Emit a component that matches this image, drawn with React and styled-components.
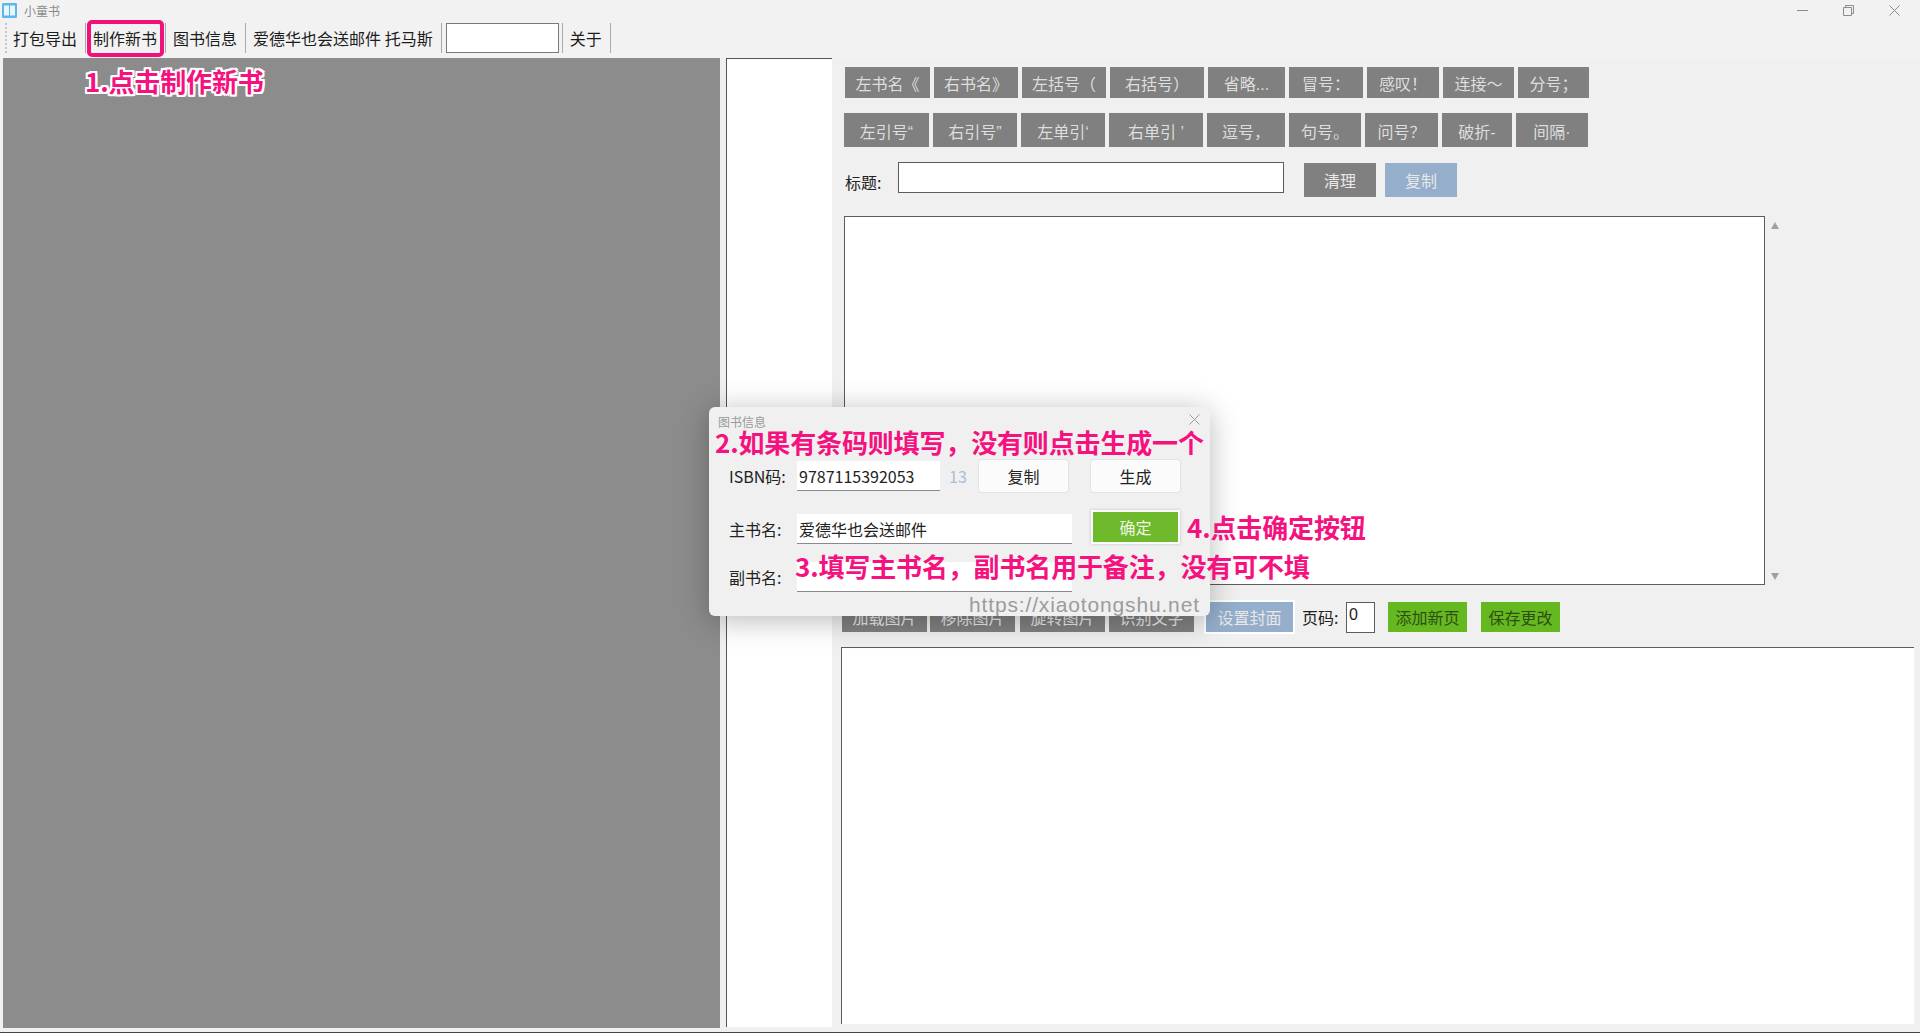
import React from "react";
import styled, { createGlobalStyle } from "styled-components";

const GlobalStyle = createGlobalStyle`
    html, body {
        margin: 0;
        padding: 0;
        height: 1033px;
        overflow: hidden;
        background: #f0f0f0;
    }
    * {
        box-sizing: border-box;
    }
`;

const Window = styled.div`
    position: relative;
    width: 1920px;
    height: 1033px;
    display: flex;
    flex-direction: column;
    background: #f0f0f0;
    border-bottom: 1px solid #444;
    font-family: "Noto Sans CJK SC", "Liberation Sans", sans-serif;
    color: #222;
    overflow: hidden;
`;

const TitleBar = styled.div`
    height: 20px;
    flex: none;
    display: flex;
    align-items: center;
    padding: 0 20px 0 2px;
    background: #f2f2f2;
`;

const AppName = styled.span`
    margin-left: 7px;
    font-size: 12px;
    color: #8a8a8a;
    flex: 1;
`;

const WinControls = styled.div`
    display: flex;
    align-items: center;
    gap: 35px;
    color: #8c8c8c;
`;

const Toolbar = styled.div`
    height: 38px;
    flex: none;
    display: flex;
    align-items: center;
    padding: 0 0 2px 5px;
    background: #f2f2f2;
`;

const Grip = styled.div`
    width: 2px;
    height: 30px;
    margin-right: 6px;
    border-left: 2px dotted #c4c4c4;
`;

const ToolText = styled.span`
    font-size: 16px;
    line-height: 24px;
    margin-right: 8px;
    white-space: nowrap;
    color: #1d1d1d;
`;

const ToolSep = styled.div`
    width: 1px;
    height: 30px;
    margin-right: ${props => props.$after}px;
    background: #a8a8a8;
`;

const ToolInput = styled.input`
    width: 113px;
    height: 30px;
    margin-right: 3px;
    padding: 0;
    border: 1px solid #7a7a7a;
    background: #fff;
`;

const Main = styled.div`
    flex: 1;
    display: flex;
    align-items: flex-start;
`;

const PagePanel = styled.div`
    width: 717px;
    height: 970px;
    margin-left: 3px;
    background: #8c8c8c;
`;

const ListPanel = styled.div`
    width: 106px;
    height: 969px;
    margin-left: 6px;
    background: #fff;
    border-left: 1px solid #555;
    border-top: 1px solid #555;
`;

const Editor = styled.div`
    width: 1079px;
    margin-left: 9px;
    padding-top: 9px;
    display: flex;
    flex-direction: column;
`;

const ButtonRow = styled.div`
    display: flex;
    gap: 4px;
    margin-top: ${props => props.$top || 0}px;
    padding-left: ${props => props.$indent || 0}px;
`;

const KeyButton = styled.div`
    width: ${props => props.$w}px;
    height: ${props => props.$h}px;
    padding-top: 1px;
    display: flex;
    align-items: center;
    justify-content: center;
    flex: none;
    font-family: "Liberation Sans", "Noto Sans CJK SC", sans-serif;
    font-size: 16px;
    color: #dedede;
    background: #808080;
`;

const TitleRow = styled.div`
    display: flex;
    align-items: flex-start;
    margin-top: 15px;
    padding-left: 4px;
`;

const FieldLabel = styled.span`
    width: 53px;
    padding-top: 6px;
    font-size: 16px;
    line-height: 28px;
    color: #222;
`;

const TitleInput = styled.input`
    width: 386px;
    height: 31px;
    padding: 0;
    border: 1px solid #5c5c5c;
    background: #fff;
`;

const ActionButton = styled.div`
    width: 72px;
    height: 34px;
    margin: 1px 0 0 ${props => props.$left}px;
    display: flex;
    align-items: center;
    justify-content: center;
    font-size: 16px;
    color: #e8e8e8;
    background: ${props => (props.$blue ? "#94aecb" : "#808080")};
`;

const TextRow = styled.div`
    display: flex;
    margin-top: 19px;
    padding-left: 3px;
`;

const TextBox = styled.div`
    width: 921px;
    height: 369px;
    background: #fff;
    border: 1px solid #5c5c5c;
`;

const ScrollArrows = styled.div`
    width: 19px;
    height: 369px;
    padding: 6px 0 5px;
    display: flex;
    flex-direction: column;
    align-items: center;
    justify-content: space-between;
`;

const Arrow = styled.div`
    width: 0;
    height: 0;
    border-left: 4px solid transparent;
    border-right: 4px solid transparent;
    border-${props => (props.$down ? "top" : "bottom")}: 7px solid #a0a0a0;
`;

const ToolRow = styled.div`
    display: flex;
    align-items: center;
    height: 32px;
    margin-top: 16px;
    padding-left: 1px;
`;

const ImageButton = styled.div`
    width: ${props => props.$w}px;
    height: 30px;
    margin-left: ${props => props.$left || 0}px;
    display: flex;
    align-items: center;
    justify-content: center;
    flex: none;
    font-size: 16px;
    color: ${props => (props.$green ? "#2d4f12" : "#e8e8e8")};
    background: ${props => (props.$green ? "#66b821" : props.$blue ? "#94aecb" : "#808080")};
    box-shadow: ${props => (props.$blue ? "0 0 0 2px #fff" : "none")};
`;

const PageLabel = styled.span`
    margin-left: 9px;
    width: 44px;
    font-size: 16px;
    white-space: nowrap;
    color: #222;
`;

const PageInput = styled.input`
    width: 29px;
    height: 31px;
    padding: 0 0 4px 2px;
    border: 1px solid #5c5c5c;
    background: #fff;
    font-family: "Liberation Sans", sans-serif;
    font-size: 16px;
    color: #222;
`;

const LowerBox = styled.div`
    width: 1073px;
    height: 377px;
    margin-top: 14px;
    background: #fff;
    border-top: 1px solid #5c5c5c;
    border-left: 1px solid #5c5c5c;
`;

const Dialog = styled.div`
    position: absolute;
    left: 709px;
    top: 407px;
    width: 501px;
    height: 209px;
    padding: 7px 10px 0 20px;
    border-radius: 6px;
    background: #f0f0f0;
    box-shadow: 0 4px 30px rgba(0, 0, 0, 0.28);
`;

const DialogHead = styled.div`
    height: 46px;
    margin-left: -11px;
    display: flex;
    justify-content: space-between;
    color: #9a9a9a;
    font-size: 12px;
    line-height: 16px;
`;

const DialogRow = styled.div`
    display: flex;
    align-items: center;
    height: ${props => props.$h}px;
    margin-bottom: ${props => props.$bottom || 0}px;
`;

const DialogLabel = styled.span`
    width: 68px;
    flex: none;
    font-size: 16px;
    color: #222;
    white-space: nowrap;
`;

const DialogInput = styled.input`
    width: ${props => props.$w}px;
    height: 30px;
    padding: 0 2px;
    flex: none;
    border: 0;
    border-bottom: 1px solid #8a8a8a;
    background: #fff;
    font-family: "Noto Sans CJK SC", sans-serif;
    font-size: 16px;
    color: #222;
    outline: none;
`;

const Count = styled.span`
    width: 30px;
    margin-left: 9px;
    font-size: 16px;
    color: #a9bfd6;
`;

const PlainButton = styled.div`
    width: 89px;
    height: 32px;
    margin-right: ${props => props.$right || 0}px;
    display: flex;
    align-items: center;
    justify-content: center;
    flex: none;
    border-radius: 3px;
    font-size: 16px;
    color: #222;
    background: #fbfbfb;
    box-shadow: 0 0 2px rgba(0, 0, 0, 0.2);
`;

const ConfirmButton = styled.div`
    width: 85px;
    height: 30px;
    margin: -4px 0 0 21px;
    display: flex;
    align-items: center;
    justify-content: center;
    font-size: 16px;
    color: #eef6e4;
    background: #6fba2c;
    box-shadow: 0 0 0 2px #fbfbfb, 0 0 3px 2px rgba(0, 0, 0, 0.2);
`;

const Note = styled.div`
    position: absolute;
    left: ${props => props.$x}px;
    top: ${props => props.$y}px;
    font-size: 26px;
    line-height: 34px;
    font-weight: 700;
    color: #f5127f;
    white-space: nowrap;
    letter-spacing: -0.15px;
    text-shadow: ${props =>
        props.$outlined
            ? "2px 0 0 #fff, -2px 0 0 #fff, 0 2px 0 #fff, 0 -2px 0 #fff, 2px 2px 0 #fff, -2px -2px 0 #fff, 2px -2px 0 #fff, -2px 2px 0 #fff"
            : "none"};
`;

const Watermark = styled.div`
    position: absolute;
    left: 969px;
    top: 590px;
    font-family: "Liberation Sans", sans-serif;
    font-size: 21px;
    line-height: 30px;
    letter-spacing: 0.85px;
    color: #9c9c9c;
    white-space: nowrap;
`;

const Highlight = styled.div`
    position: absolute;
    left: 87px;
    top: 20px;
    width: 77px;
    height: 37px;
    border: 4px solid #f0117b;
    border-radius: 5px;
`;

const row1 = [
    ["左书名《", 85], ["右书名》", 84], ["左括号（", 84], ["右括号）", 94], ["省略...", 77],
    ["冒号：", 74], ["感叹！", 72], ["连接～", 71], ["分号；", 71],
];

const row2 = [
    ["左引号“", 85], ["右引号”", 84], ["左单引‘", 84], ["右单引 ’", 94], ["逗号，", 78],
    ["句号。", 72], ["问号？", 73], ["破折-", 70], ["间隔·", 72],
];

const imageButtons = [["加载图片", 85, 0], ["移除图片", 85, 3], ["旋转图片", 85, 5], ["识别文字", 85, 4]];

const BookIcon = () => (
    <svg width="15" height="15" viewBox="0 0 15 15">
        <rect width="15" height="15" rx="1" fill="#5cb8ea" />
        <rect x="2" y="2.5" width="5" height="10" fill="#e8f5fc" />
        <rect x="8" y="2.5" width="5" height="10" fill="#e8f5fc" />
    </svg>
);

const MinIcon = () => (
    <svg width="11" height="11" viewBox="0 0 11 11">
        <path d="M0 5.5h11" stroke="currentColor" fill="none" />
    </svg>
);

const RestoreIcon = () => (
    <svg width="11" height="11" viewBox="0 0 11 11">
        <path d="M.5 2.5h8v8h-8zM2.5 2.5v-2h8v8h-2" stroke="currentColor" fill="none" />
    </svg>
);

const CloseIcon = ({ size = 11 }) => (
    <svg width={size} height={size} viewBox="0 0 11 11">
        <path d="M.5.5l10 10M10.5.5l-10 10" stroke="currentColor" fill="none" />
    </svg>
);

export default function App() {
    return (
        <Window>
            <GlobalStyle />
            <TitleBar>
                <BookIcon />
                <AppName>小童书</AppName>
                <WinControls>
                    <MinIcon />
                    <RestoreIcon />
                    <CloseIcon />
                </WinControls>
            </TitleBar>
            <Toolbar>
                <Grip />
                <ToolText>打包导出</ToolText>
                <ToolSep $after={7} />
                <ToolText>制作新书</ToolText>
                <ToolSep $after={7} />
                <ToolText>图书信息</ToolText>
                <ToolSep $after={7} />
                <ToolText>爱德华也会送邮件 托马斯</ToolText>
                <ToolSep $after={4} />
                <ToolInput readOnly />
                <ToolSep $after={7} />
                <ToolText>关于</ToolText>
                <ToolSep $after={0} />
            </Toolbar>
            <Main>
                <PagePanel />
                <ListPanel />
                <Editor>
                    <ButtonRow $indent={4}>
                        {row1.map(([label, w]) => (
                            <KeyButton key={label} $w={w} $h={31}>{label}</KeyButton>
                        ))}
                    </ButtonRow>
                    <ButtonRow $top={15} $indent={3}>
                        {row2.map(([label, w]) => (
                            <KeyButton key={label} $w={w} $h={34}>{label}</KeyButton>
                        ))}
                    </ButtonRow>
                    <TitleRow>
                        <FieldLabel>标题:</FieldLabel>
                        <TitleInput readOnly />
                        <ActionButton $left={20}>清理</ActionButton>
                        <ActionButton $left={9} $blue>复制</ActionButton>
                    </TitleRow>
                    <TextRow>
                        <TextBox />
                        <ScrollArrows>
                            <Arrow />
                            <Arrow $down />
                        </ScrollArrows>
                    </TextRow>
                    <ToolRow>
                        {imageButtons.map(([label, w, left]) => (
                            <ImageButton key={label} $w={w} $left={left}>{label}</ImageButton>
                        ))}
                        <ImageButton $w={87} $left={12} $blue>设置封面</ImageButton>
                        <PageLabel>页码:</PageLabel>
                        <PageInput readOnly value="0" />
                        <ImageButton $w={79} $left={13} $green>添加新页</ImageButton>
                        <ImageButton $w={79} $left={14} $green>保存更改</ImageButton>
                    </ToolRow>
                    <LowerBox />
                </Editor>
            </Main>

            <Dialog>
                <DialogHead>
                    <span>图书信息</span>
                    <CloseIcon size={11} />
                </DialogHead>
                <DialogRow $h={32} $bottom={22}>
                    <DialogLabel>ISBN码:</DialogLabel>
                    <DialogInput $w={143} readOnly value="9787115392053" />
                    <Count>13</Count>
                    <PlainButton $right={23}>复制</PlainButton>
                    <PlainButton>生成</PlainButton>
                </DialogRow>
                <DialogRow $h={30} $bottom={18}>
                    <DialogLabel>主书名:</DialogLabel>
                    <DialogInput $w={275} readOnly value="爱德华也会送邮件" />
                    <ConfirmButton>确定</ConfirmButton>
                </DialogRow>
                <DialogRow $h={30}>
                    <DialogLabel>副书名:</DialogLabel>
                    <DialogInput $w={275} readOnly />
                </DialogRow>
            </Dialog>

            <Highlight />
            <Note $x={85} $y={64} $outlined>1.点击制作新书</Note>
            <Note $x={715} $y={425}>2.如果有条码则填写，没有则点击生成一个</Note>
            <Note $x={1187} $y={510}>4.点击确定按钮</Note>
            <Note $x={795} $y={549}>3.填写主书名，副书名用于备注，没有可不填</Note>
            <Watermark>https://xiaotongshu.net</Watermark>
        </Window>
    );
}
